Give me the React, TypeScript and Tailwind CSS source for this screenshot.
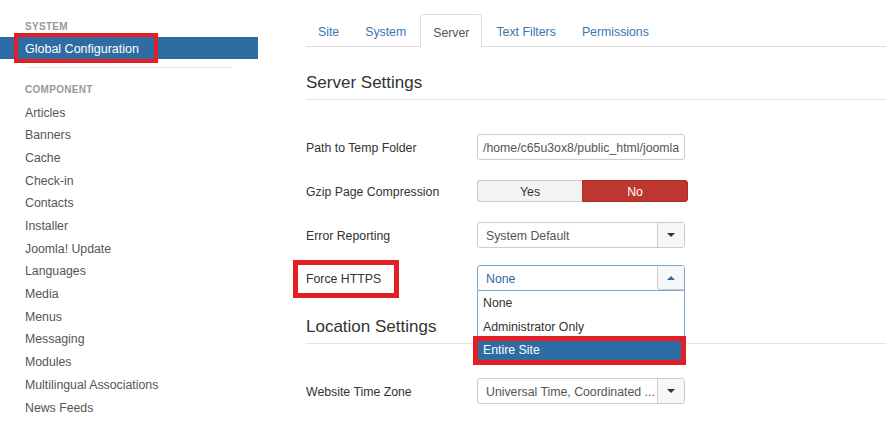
const sidebarItems = [
  "Articles",
  "Banners",
  "Cache",
  "Check-in",
  "Contacts",
  "Installer",
  "Joomla! Update",
  "Languages",
  "Media",
  "Menus",
  "Messaging",
  "Modules",
  "Multilingual Associations",
  "News Feeds",
]

const tabs = ["Site", "System", "Server", "Text Filters", "Permissions"]

function Caret({ up = false }: { up?: boolean }) {
  return (
    <div
      className={
        up
          ? "w-0 h-0 border-l-[4px] border-r-[4px] border-b-[4px] border-l-transparent border-r-transparent border-b-[#2e6da4]"
          : "w-0 h-0 border-l-[4px] border-r-[4px] border-t-[4px] border-l-transparent border-r-transparent border-t-[#333]"
      }
    />
  )
}

function Select({ value }: { value: string }) {
  return (
    <div className="flex h-[26px] w-[208px] border border-[#ccc] rounded-[3px] bg-white">
      <span className="flex-1 pl-[8px] leading-[26px] text-[#555] overflow-hidden whitespace-nowrap">{value}</span>
      <div className="w-[27px] shrink-0 border-l border-[#ccc] bg-[#f7f7f7] flex items-center justify-center rounded-r-[3px]">
        <Caret />
      </div>
    </div>
  )
}

function Row({ label, children, className = "" }: { label: React.ReactNode; children: React.ReactNode; className?: string }) {
  return (
    <div className={"flex items-center h-[26px] " + className}>
      <div className="w-[171px] pt-[2px] text-[#333]">{label}</div>
      {children}
    </div>
  )
}

export default function App() {
  return (
    <div className="flex w-[886px] h-[423px] overflow-hidden bg-white text-[12.3px] font-['Liberation_Sans',Arial,sans-serif]">
      {/* Sidebar */}
      <div className="w-[258px] shrink-0 pt-[20px]">
        <div className="pl-[25px] h-[14px] leading-[14px] text-[10px] font-bold text-[#999] tracking-[0.3px]">SYSTEM</div>
        <div className="relative mt-[3px] h-[22px] bg-[#2e6da4] pl-[25px] leading-[24px] text-white text-[12.5px]">
          Global Configuration
          <div className="absolute left-[14px] -top-[4px] -bottom-[4px] w-[144px] border-[4px] border-[#e31e24]" />
        </div>
        <div className="ml-[27px] mt-[8px] w-[205px] h-px bg-[#e5e5e5]" />
        <div className="mt-[15px] pl-[25px] h-[14px] leading-[14px] text-[10px] font-bold text-[#999] tracking-[0.3px]">COMPONENT</div>
        <div className="mt-[4.6px]">
          {sidebarItems.map((item) => (
            <div key={item} className="pl-[25px] h-[22.7px] leading-[23.7px] text-[#555]">
              {item}
            </div>
          ))}
        </div>
      </div>

      {/* Main */}
      <div className="flex-1 pl-[48px] pt-[14px]">
        <div className="flex border-b border-[#ddd] h-[33px]">
          {tabs.map((t) =>
            t === "Server" ? (
              <div
                key={t}
                className="mr-[2px] px-[12px] h-[34px] pt-[4px] leading-[29px] border border-[#ddd] border-b-white rounded-t-[4px] bg-white text-[#555]"
              >
                {t}
              </div>
            ) : (
              <div key={t} className="mr-[2px] px-[12px] h-[33px] pt-[4px] leading-[29px] text-[#3a76ae]">
                {t}
              </div>
            )
          )}
        </div>

        <div className="mt-[24px] pb-[4px] h-[29px] leading-[24px] border-b border-[#e5e5e5] text-[17px] text-[#333]">
          Server Settings
        </div>

        <Row label="Path to Temp Folder" className="mt-[34px]">
          <div className="w-[208px] h-[26px] border border-[#ccc] rounded-[3px] px-[5px] leading-[26px] text-[#555] overflow-hidden whitespace-nowrap">
            /home/c65u3ox8/public_html/joomla
          </div>
        </Row>

        <Row label="Gzip Page Compression" className="mt-[18px]">
          <div className="flex h-[22px] w-[211px]">
            <div className="w-[105px] border border-[#ccc] border-r-0 rounded-l-[3px] bg-[#f3f3f3] text-[#333] text-center leading-[22px]">
              Yes
            </div>
            <div className="flex-1 rounded-r-[3px] bg-[#bd362f] border border-[#a82f29] text-white text-center leading-[22px]">
              No
            </div>
          </div>
        </Row>

        <Row label="Error Reporting" className="mt-[18px]">
          <Select value="System Default" />
        </Row>

        <Row
          className="mt-[17px]"
          label={
            <span className="relative">
              Force HTTPS
              <span className="absolute -left-[13px] -top-[12px] h-[38px] w-[106px] border-[5px] border-[#e31e24]" />
            </span>
          }
        >
          <div className="relative w-[208px] h-[26px]">
            <div className="flex h-[26px] border border-[#7ea6cc] rounded-t-[3px] bg-white">
              <span className="flex-1 px-[8px] leading-[26px] text-[#2e6da4]">None</span>
              <div className="w-[27px] border-l border-b border-[#ccc] bg-[#f7f7f7] flex items-center justify-center rounded-bl-[3px]">
                <Caret up />
              </div>
            </div>
            <div className="absolute left-0 top-full w-full border-x border-b border-[#7ea6cc] bg-white z-10">
              <div className="h-[23.5px] leading-[25px] px-[5px] text-[#333]">None</div>
              <div className="h-[23.5px] leading-[25px] px-[5px] text-[#333]">Administrator Only</div>
              <div className="relative h-[23px] leading-[24px] px-[5px] bg-[#2e6da4] text-white">
                Entire Site
                <div className="absolute -left-[5px] -right-[2px] -top-[2px] -bottom-[4px] border-[5px] border-[#e31e24]" />
              </div>
            </div>
          </div>
        </Row>

        <div className="mt-[24px] pb-[4px] h-[29px] leading-[24px] border-b border-[#e5e5e5] text-[17px] text-[#333]">
          Location Settings
        </div>

        <Row label="Website Time Zone" className="mt-[34px]">
          <Select value="Universal Time, Coordinated ..." />
        </Row>
      </div>
    </div>
  )
}
